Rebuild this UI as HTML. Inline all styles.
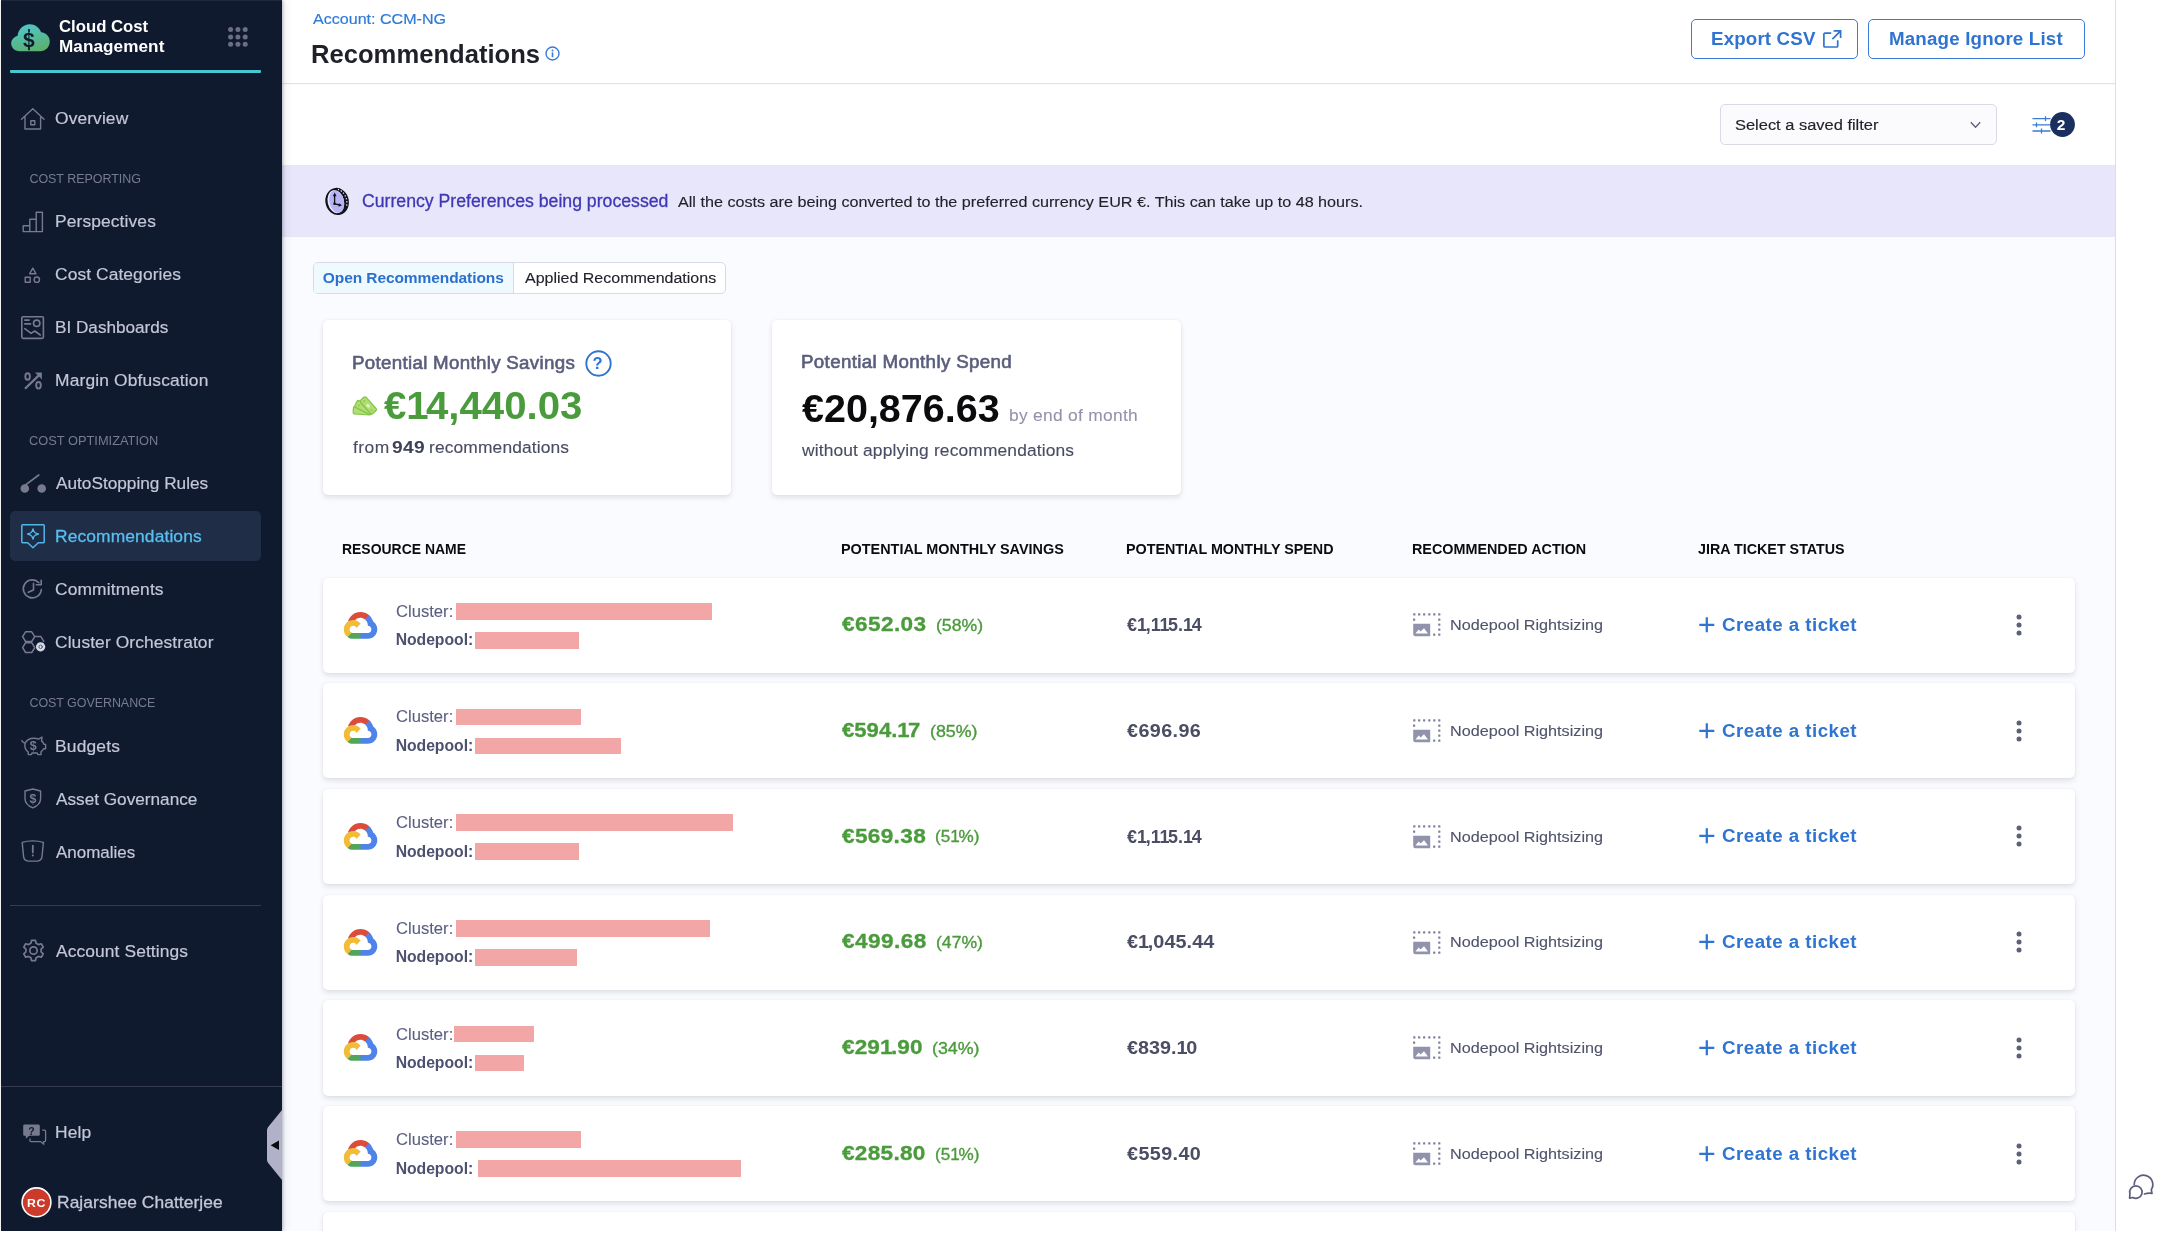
<!DOCTYPE html>
<html lang="en">
<head>
<meta charset="utf-8">
<title>Recommendations - Cloud Cost Management</title>
<style>
*{box-sizing:border-box;margin:0;padding:0}
html,body{width:2180px;height:1238px;overflow:hidden;background:#fff}
body{font-family:"Liberation Sans",sans-serif;position:relative}
.t{position:absolute;white-space:pre;line-height:1;display:block;transform-origin:0 50%}
#app{position:absolute;left:0;top:0;width:2180px;height:1238px;overflow:hidden;will-change:transform}
#main{position:absolute;left:282px;top:0;width:1833px;height:1231px;background:#fafbfe}
#rightbar{position:absolute;left:2115px;top:0;width:65px;height:1231px;background:#fff;border-left:1.5px solid #dcdcea}
#side{position:absolute;left:1px;top:0;width:280.5px;height:1231px;background:#0f1a2e;box-shadow:1px 0 3px rgba(20,25,50,.28),3px 0 10px rgba(20,25,50,.07)}
#header{position:absolute;left:282px;top:0;width:1833px;height:84.2px;background:#fff;border-bottom:1.5px solid #dfe0ea}
#filterbar{position:absolute;left:282px;top:84.5px;width:1833px;height:80.5px;background:#fff}
#banner{position:absolute;left:282px;top:165px;width:1833px;height:71.6px;background:#e7e6fa}
.tealbar{position:absolute;left:10px;top:70.3px;width:251px;height:3px;background:#4ac6d0;border-radius:1px}
.sel{position:absolute;left:10.2px;top:511px;width:250.6px;height:50px;background:#1f2d47;border-radius:5px}
.divider{position:absolute;height:1.3px;background:#363b52}
.btn{position:absolute;top:19px;height:39.8px;border:1.6px solid #3a7bd5;border-radius:5px;background:#fff}
.select{position:absolute;left:1720px;top:104.4px;width:276.8px;height:40.2px;border:1.3px solid #d9dae6;border-radius:5px;background:#fbfbfd}
.tabs{position:absolute;left:312.6px;top:262.2px;width:413.8px;height:31.4px;border:1.3px solid #d9dae5;border-radius:5px;background:#fff;overflow:hidden}
.tabs i{position:absolute;left:0;top:0;width:200px;height:100%;background:#effafe;border-right:1.3px solid #d9dae5}
.card{position:absolute;top:319.5px;height:175.8px;background:#fff;border-radius:5px;box-shadow:0 0 1.25px rgba(40,41,61,.08),0 2.5px 5px rgba(96,97,112,.16)}
.row{position:absolute;left:322.6px;width:1752.2px;height:95.2px;background:#fff;border-radius:5px;box-shadow:0 0 1.25px rgba(40,41,61,.08),0 2.5px 5px rgba(96,97,112,.16)}
.red{position:absolute;height:16.8px;background:#f2a6a6}
.gcp{position:absolute;left:343.6px;width:33px;height:27px}
.nodeic{position:absolute;left:1412.8px;width:28px;height:23.2px}
.plus{position:absolute;left:1699.4px;width:15.6px;height:15.6px}
.kebab{position:absolute;left:2015.6px;width:6px;height:22px;fill:#5e6079}
svg{position:absolute;overflow:visible}
.n1{font-weight:inherit}
#cover{position:absolute;left:0;top:1231px;width:2180px;height:7px;background:#fff;z-index:50}
#cover2{position:absolute;left:2116.5px;top:0;width:64px;height:1238px;background:#fff;z-index:40}
.ni{fill:none;stroke:#77798f;stroke-width:1.4;stroke-linecap:round;stroke-linejoin:round}
</style>
</head>
<body>
<svg width="0" height="0" style="position:absolute">
<defs>
<linearGradient id="ccmg" x1="0.3" y1="0" x2="0.7" y2="1"><stop offset="0" stop-color="#4fc6cf"/><stop offset="1" stop-color="#5bb06a"/></linearGradient>
<g id="gcp">
<path d="M21.0 7.4 L22.1 7.4 L25.0 4.5 L25.2 3.3 C19.8 -1.5 11.5 -1.0 6.7 4.4 C5.4 5.9 4.4 7.7 3.9 9.6 C4.2 9.5 4.9 9.4 4.9 9.4 L10.7 8.5 C10.7 8.5 11.0 8.0 11.2 8.0 C13.7 5.2 18.0 4.9 21.0 7.4 Z" fill="#dc4c3b"/>
<path d="M29.2 9.6 C28.5 7.2 27.1 5.0 25.2 3.3 L21.1 7.4 C22.8 8.8 23.8 10.9 23.8 13.1 L23.8 13.8 C25.8 13.8 27.4 15.4 27.4 17.4 C27.4 19.4 25.8 21.0 23.8 21.0 L16.5 21.0 L15.8 21.8 L15.8 26.1 L16.5 26.8 L23.8 26.8 C29.0 26.9 33.2 22.7 33.3 17.5 C33.3 14.3 31.8 11.4 29.2 9.6 Z" fill="#4f83ea"/>
<path d="M9.2 26.8 L16.5 26.8 L16.5 21.0 L9.2 21.0 C8.7 21.0 8.2 20.9 7.7 20.7 L6.7 21.0 L3.8 23.9 L3.5 24.9 C5.1 26.2 7.1 26.9 9.2 26.8 Z" fill="#52a65a"/>
<path d="M9.2 7.9 C4.0 8.0 -0.2 12.2 -0.2 17.4 C-0.2 20.3 1.2 23.1 3.5 24.9 L7.7 20.7 C5.9 19.8 5.1 17.7 5.9 15.9 C6.7 14.0 8.9 13.2 10.7 14.1 C11.5 14.4 12.2 15.1 12.5 15.9 L16.7 11.6 C14.9 9.3 12.1 7.9 9.2 7.9 Z" fill="#f1bc38"/>
</g>
<g id="nodeic">
<g fill="#7d7f9c"><rect x="0.20" y="0.35" width="2.2" height="2.2" rx=".5"/><rect x="5.05" y="0.35" width="2.2" height="2.2" rx=".5"/><rect x="10.05" y="0.35" width="2.2" height="2.2" rx=".5"/><rect x="15.20" y="0.35" width="2.2" height="2.2" rx=".5"/><rect x="20.20" y="0.35" width="2.2" height="2.2" rx=".5"/><rect x="25.20" y="0.35" width="2.2" height="2.2" rx=".5"/><rect x="0.00" y="5.50" width="2.2" height="2.2" rx=".5"/><rect x="25.20" y="5.50" width="2.2" height="2.2" rx=".5"/><rect x="25.20" y="10.50" width="2.2" height="2.2" rx=".5"/><rect x="25.20" y="15.50" width="2.2" height="2.2" rx=".5"/><rect x="25.20" y="20.50" width="2.2" height="2.2" rx=".5"/><rect x="20.10" y="20.50" width="2.2" height="2.2" rx=".5"/></g>
<path d="M.2 10.700h17v12.500H2.400a2.200 2.200 0 0 1-2.200-2.200z" fill="#9193ad"/>
<path d="M2.400 20.500l3.300-3.900 1.900 2 3.400-3.400 4 5.300z" fill="#fff"/>
</g>
</defs>
</svg>
<div id="app">
<div id="main"></div>
<div id="header"></div>
<div id="filterbar"></div>
<div id="banner"></div>
<div id="rightbar"></div>

<!-- header widgets -->
<div class="btn" style="left:1691px;width:167.3px"></div>
<div class="btn" style="left:1868.2px;width:217px"></div>
<svg style="left:1822.6px;top:30px" width="19" height="18" viewBox="0 0 19 18" fill="none" stroke="#2f74d0" stroke-width="1.7"><path d="M8.2 3.2H1.9a1 1 0 0 0-1 1v11.8a1 1 0 0 0 1 1h11.8a1 1 0 0 0 1-1V10.2"/><path d="M10.6 .9h7v7M17.4 1.1l-8 8"/></svg>
<svg style="left:544.6px;top:45.8px" width="15" height="15" viewBox="0 0 15 15"><circle cx="7.5" cy="7.5" r="6.5" fill="none" stroke="#3a7bd5" stroke-width="1.4"/><circle cx="7.5" cy="4.5" r="1" fill="#3a7bd5"/><rect x="6.7" y="6.4" width="1.6" height="4.8" fill="#3a7bd5"/></svg>
<div class="select"></div>
<svg style="left:1970.4px;top:120.6px" width="11" height="8" viewBox="0 0 11 8"><path d="M.8 1.2l4.7 5 4.7-5" fill="none" stroke="#5a5e78" stroke-width="1.3"/></svg>
<svg style="left:2031.5px;top:115px" width="20" height="20" viewBox="0 0 20 20" stroke="#3a7bd5" stroke-width="1.3" fill="none"><path d="M.5 3.6h18M.5 9.8h18M.5 16h18M13.5 1.2v4.8M4.5 7.4v4.8M9.5 13.6v4.8"/></svg>
<svg style="left:2049.6px;top:112.2px" width="25" height="25" viewBox="0 0 25 25"><circle cx="12.5" cy="12.5" r="12.4" fill="#1a2f5f"/></svg>

<!-- banner icon -->
<svg style="left:325px;top:188px" width="24" height="27" viewBox="0 0 24 27">
<g transform="rotate(-13 12.100 13.400)">
<ellipse cx="12.100" cy="13.400" rx="11.700" ry="13.600" fill="#111118"/>
<path d="M15.600 1.900A8.900 12.200 0 0 1 20 20.600" fill="none" stroke="#e4e3fa" stroke-width="1.300" stroke-dasharray="1.300 1.800"/>
<ellipse cx="10.800" cy="13.400" rx="8.200" ry="11.700" fill="#e9e8fb"/>
<ellipse cx="11.700" cy="13.500" rx="7.300" ry="11.300" fill="#b6b4f5"/>
</g>
<path d="M9.600 7v8.800l5.400 1.200" fill="none" stroke="#111118" stroke-width="1.300" stroke-linejoin="round"/>
<path d="M7.800 8.300L9.700 4.500l1.900 3.800zM14 15.200l3 2.100-3.500 1.400z" fill="#111118"/>
<circle cx="9.500" cy="15.800" r="1.300" fill="#111118"/>
</svg>

<div class="tabs"><i></i></div>
<div class="card" style="left:322.7px;width:408.5px"></div>
<div class="card" style="left:772px;width:408.8px"></div>
<svg style="left:584.8px;top:350px" width="27" height="27" viewBox="0 0 27 27"><circle cx="13.5" cy="13.5" r="12.2" fill="#fff" stroke="#2f74d0" stroke-width="1.9"/></svg>
<svg style="left:353px;top:395.800px" width="24" height="20" viewBox="0 0 24 20">
<g fill="#b1dd74" stroke="#7fc447" stroke-width="1.200">
<rect x="-9" y="-3.800" width="18" height="7.600" rx="1.700" transform="translate(9.300 14.700) rotate(4)"/>
<rect x="-9" y="-3.800" width="18" height="7.600" rx="1.700" transform="translate(11 11.400) rotate(27)"/>
<rect x="-9" y="-3.800" width="18" height="7.600" rx="1.700" transform="translate(15.300 9.400) rotate(48)"/>
</g>
<circle cx="11.300" cy="5" r="1.100" fill="#8fcf4f"/><circle cx="18.500" cy="14.100" r="1.100" fill="#8fcf4f"/><circle cx="5.900" cy="9.600" r="1" fill="#8fcf4f"/>
<ellipse cx="15.100" cy="9.700" rx="2.100" ry="1.500" fill="#dff3c0" transform="rotate(48 15.100 9.700)"/>
</svg>

<span class="t" style="left:312.55px;top:11px;font-size:15.5px;color:#2f7bd6;-webkit-text-stroke:0.2px #2f7bd6;transform:scaleX(1.0368);">Account: CCM-NG</span>
<span class="t" style="left:310.77px;top:42px;font-size:25px;color:#1f2029;font-weight:700;transform:scaleX(1.0244);">Recommendations</span>
<span class="t" style="left:1710.97px;top:31px;font-size:17.5px;color:#2f74d0;font-weight:700;letter-spacing:0.142px;transform:scaleX(1.0700);">Export CSV</span>
<span class="t" style="left:1888.88px;top:31px;font-size:17.5px;color:#2f74d0;font-weight:700;letter-spacing:0.167px;transform:scaleX(1.0700);">Manage Ignore List</span>
<span class="t" style="left:1735.29px;top:117px;font-size:15.5px;color:#22222a;-webkit-text-stroke:0.15px #22222a;transform:scaleX(1.0606);">Select a saved filter</span>
<span class="t" style="left:2056.80px;top:117px;font-size:15.5px;color:#ffffff;font-weight:700;">2</span>
<span class="t" style="left:361.93px;top:193px;font-size:17.5px;color:#3f37b3;-webkit-text-stroke:0.3px #3f37b3;transform:scaleX(1.0095);">Currency Preferences being processed</span>
<span class="t" style="left:678.41px;top:194px;font-size:15.5px;color:#22222a;-webkit-text-stroke:0.12px #22222a;transform:scaleX(1.0425);">All the costs are being converted to the preferred currency EUR €. This can take up to 48 hours.</span>
<span class="t" style="left:322.78px;top:270px;font-size:15.5px;color:#2b70cf;font-weight:700;letter-spacing:-0.082px;">Open Recommendations</span>
<span class="t" style="left:524.72px;top:270px;font-size:15.5px;color:#22222a;-webkit-text-stroke:0.12px #22222a;transform:scaleX(1.0318);">Applied Recommendations</span>
<span class="t" style="left:351.53px;top:355px;font-size:17.5px;color:#5a5e7c;letter-spacing:0.284px;-webkit-text-stroke:0.6px #5a5e7c;transform:scaleX(1.0700);">Potential Monthly Savings</span>
<span class="t" style="left:592.42px;top:355px;font-size:16.5px;color:#2f74d0;font-weight:700;">?</span>
<span class="t" style="left:383.81px;top:387px;font-size:38px;color:#4a9b3b;font-weight:700;transform:scaleX(1.0581);">€<b class="n1" style="margin:0 -2.66px 0 -0.00px">1</b>4,440.03</span>
<span class="t" style="left:352.51px;top:439px;font-size:16.25px;color:#494c62;letter-spacing:0.418px;-webkit-text-stroke:0.12px #494c62;transform:scaleX(1.0700);">from</span>
<span class="t" style="left:392.17px;top:439px;font-size:17px;color:#3f4257;font-weight:700;letter-spacing:0.300px;transform:scaleX(1.1300);">949</span>
<span class="t" style="left:428.57px;top:439px;font-size:16.25px;color:#494c62;letter-spacing:0.124px;-webkit-text-stroke:0.12px #494c62;transform:scaleX(1.0700);">recommendations</span>
<span class="t" style="left:801.23px;top:354px;font-size:17.5px;color:#5a5e7c;letter-spacing:0.328px;-webkit-text-stroke:0.6px #5a5e7c;transform:scaleX(1.0700);">Potential Monthly Spend</span>
<span class="t" style="left:802.42px;top:390px;font-size:38px;color:#0b0b0d;font-weight:700;transform:scaleX(1.0391);">€20,876.63</span>
<span class="t" style="left:1008.78px;top:407px;font-size:16.25px;color:#9293ab;letter-spacing:0.270px;-webkit-text-stroke:0.1px #9293ab;transform:scaleX(1.0700);">by end of month</span>
<span class="t" style="left:802.31px;top:442px;font-size:16.25px;color:#494c62;letter-spacing:0.130px;-webkit-text-stroke:0.12px #494c62;transform:scaleX(1.0700);">without applying recommendations</span>
<span class="t" style="left:341.61px;top:543px;font-size:13.75px;color:#0b0b0d;font-weight:700;transform:scaleX(1.0139);">RESOURCE NAME</span>
<span class="t" style="left:840.88px;top:543px;font-size:13.75px;color:#0b0b0d;font-weight:700;transform:scaleX(1.0475);">POTENTIAL MONTHLY SAVINGS</span>
<span class="t" style="left:1126.28px;top:543px;font-size:13.75px;color:#0b0b0d;font-weight:700;transform:scaleX(1.0421);">POTENTIAL MONTHLY SPEND</span>
<span class="t" style="left:1411.68px;top:543px;font-size:13.75px;color:#0b0b0d;font-weight:700;transform:scaleX(1.0445);">RECOMMENDED ACTION</span>
<span class="t" style="left:1697.54px;top:543px;font-size:13.75px;color:#0b0b0d;font-weight:700;transform:scaleX(1.0396);">JIRA TICKET STATUS</span>
<div class="row" style="top:577.50px"></div>
<svg class="gcp" style="top:611.50px" viewBox="0 0 33 27"><use href="#gcp"/></svg>
<span class="t" style="left:395.73px;top:603px;font-size:16.25px;color:#5a5f80;-webkit-text-stroke:0.1px #5a5f80;transform:scaleX(1.0228);">Cluster:</span>
<span class="t" style="left:395.64px;top:632px;font-size:15.75px;color:#4d5170;font-weight:700;letter-spacing:-0.032px;">Nodepool:</span>
<div class="red" style="left:455.9px;top:602.80px;width:256.1px"></div>
<div class="red" style="left:475.3px;top:631.80px;width:103.9px"></div>
<span class="t" style="left:842.33px;top:614px;font-size:20px;color:#4a9b3b;font-weight:700;letter-spacing:0.356px;-webkit-text-stroke:0.3px #4a9b3b;transform:scaleX(1.1300);">€652.03</span>
<span class="t" style="left:936.05px;top:617px;font-size:16.25px;color:#4a9b3b;-webkit-text-stroke:0.35px #4a9b3b;transform:scaleX(1.0842);">(58%)</span>
<span class="t" style="left:1127.35px;top:617px;font-size:17.5px;color:#4a4d63;font-weight:700;transform:scaleX(1.0237);">€<b class="n1" style="margin:0 -1.23px 0 -0.00px">1</b>,<b class="n1" style="margin:0 -1.23px 0 -0.00px">1</b><b class="n1" style="margin:0 -1.23px 0 -0.00px">1</b>5.<b class="n1" style="margin:0 -1.23px 0 -0.00px">1</b>4</span>
<svg class="nodeic" style="top:613.40px" viewBox="0 0 28 23.2"><use href="#nodeic"/></svg>
<span class="t" style="left:1449.66px;top:617px;font-size:15.5px;color:#50546b;-webkit-text-stroke:0.12px #50546b;transform:scaleX(1.0444);">Nodepool Rightsizing</span>
<svg class="plus" style="top:616.90px" viewBox="0 0 16 16"><path d="M8 .3v15.4M.3 8h15.4" stroke="#2f74d0" stroke-width="2.300" fill="none"/></svg>
<span class="t" style="left:1721.75px;top:617px;font-size:17.5px;color:#2f74d0;font-weight:700;letter-spacing:0.438px;transform:scaleX(1.0700);">Create a ticket</span>
<svg class="kebab" style="top:614.00px" viewBox="0 0 6 22"><circle cx="3" cy="3" r="2.500"/><circle cx="3" cy="11" r="2.500"/><circle cx="3" cy="19" r="2.500"/></svg>
<div class="row" style="top:683.22px"></div>
<svg class="gcp" style="top:717.22px" viewBox="0 0 33 27"><use href="#gcp"/></svg>
<span class="t" style="left:395.73px;top:708px;font-size:16.25px;color:#5a5f80;-webkit-text-stroke:0.1px #5a5f80;transform:scaleX(1.0228);">Cluster:</span>
<span class="t" style="left:395.64px;top:738px;font-size:15.75px;color:#4d5170;font-weight:700;letter-spacing:-0.032px;">Nodepool:</span>
<div class="red" style="left:455.9px;top:708.52px;width:125.6px"></div>
<div class="red" style="left:475.3px;top:737.52px;width:145.7px"></div>
<span class="t" style="left:842.33px;top:720px;font-size:20px;color:#4a9b3b;font-weight:700;-webkit-text-stroke:0.3px #4a9b3b;transform:scaleX(1.1051);">€594.<b class="n1" style="margin:0 -1.40px 0 -0.00px">1</b>7</span>
<span class="t" style="left:929.85px;top:723px;font-size:16.25px;color:#4a9b3b;-webkit-text-stroke:0.35px #4a9b3b;transform:scaleX(1.0961);">(85%)</span>
<span class="t" style="left:1127.32px;top:723px;font-size:17.5px;color:#4a4d63;font-weight:700;letter-spacing:0.352px;transform:scaleX(1.1300);">€696.96</span>
<svg class="nodeic" style="top:719.12px" viewBox="0 0 28 23.2"><use href="#nodeic"/></svg>
<span class="t" style="left:1449.66px;top:723px;font-size:15.5px;color:#50546b;-webkit-text-stroke:0.12px #50546b;transform:scaleX(1.0444);">Nodepool Rightsizing</span>
<svg class="plus" style="top:722.62px" viewBox="0 0 16 16"><path d="M8 .3v15.4M.3 8h15.4" stroke="#2f74d0" stroke-width="2.300" fill="none"/></svg>
<span class="t" style="left:1721.75px;top:723px;font-size:17.5px;color:#2f74d0;font-weight:700;letter-spacing:0.438px;transform:scaleX(1.0700);">Create a ticket</span>
<svg class="kebab" style="top:719.72px" viewBox="0 0 6 22"><circle cx="3" cy="3" r="2.500"/><circle cx="3" cy="11" r="2.500"/><circle cx="3" cy="19" r="2.500"/></svg>
<div class="row" style="top:788.94px"></div>
<svg class="gcp" style="top:822.94px" viewBox="0 0 33 27"><use href="#gcp"/></svg>
<span class="t" style="left:395.73px;top:814px;font-size:16.25px;color:#5a5f80;-webkit-text-stroke:0.1px #5a5f80;transform:scaleX(1.0228);">Cluster:</span>
<span class="t" style="left:395.64px;top:844px;font-size:15.75px;color:#4d5170;font-weight:700;letter-spacing:-0.032px;">Nodepool:</span>
<div class="red" style="left:455.9px;top:814.24px;width:277.1px"></div>
<div class="red" style="left:475.3px;top:843.24px;width:103.9px"></div>
<span class="t" style="left:842.33px;top:826px;font-size:20px;color:#4a9b3b;font-weight:700;letter-spacing:0.296px;-webkit-text-stroke:0.3px #4a9b3b;transform:scaleX(1.1300);">€569.38</span>
<span class="t" style="left:935.37px;top:828px;font-size:16.25px;color:#4a9b3b;-webkit-text-stroke:0.35px #4a9b3b;transform:scaleX(1.0523);">(5<b class="n1" style="margin:0 -1.14px 0 -0.00px">1</b>%)</span>
<span class="t" style="left:1127.35px;top:829px;font-size:17.5px;color:#4a4d63;font-weight:700;transform:scaleX(1.0237);">€<b class="n1" style="margin:0 -1.23px 0 -0.00px">1</b>,<b class="n1" style="margin:0 -1.23px 0 -0.00px">1</b><b class="n1" style="margin:0 -1.23px 0 -0.00px">1</b>5.<b class="n1" style="margin:0 -1.23px 0 -0.00px">1</b>4</span>
<svg class="nodeic" style="top:824.84px" viewBox="0 0 28 23.2"><use href="#nodeic"/></svg>
<span class="t" style="left:1449.66px;top:829px;font-size:15.5px;color:#50546b;-webkit-text-stroke:0.12px #50546b;transform:scaleX(1.0444);">Nodepool Rightsizing</span>
<svg class="plus" style="top:828.34px" viewBox="0 0 16 16"><path d="M8 .3v15.4M.3 8h15.4" stroke="#2f74d0" stroke-width="2.300" fill="none"/></svg>
<span class="t" style="left:1721.75px;top:828px;font-size:17.5px;color:#2f74d0;font-weight:700;letter-spacing:0.438px;transform:scaleX(1.0700);">Create a ticket</span>
<svg class="kebab" style="top:825.44px" viewBox="0 0 6 22"><circle cx="3" cy="3" r="2.500"/><circle cx="3" cy="11" r="2.500"/><circle cx="3" cy="19" r="2.500"/></svg>
<div class="row" style="top:894.66px"></div>
<svg class="gcp" style="top:928.66px" viewBox="0 0 33 27"><use href="#gcp"/></svg>
<span class="t" style="left:395.73px;top:920px;font-size:16.25px;color:#5a5f80;-webkit-text-stroke:0.1px #5a5f80;transform:scaleX(1.0228);">Cluster:</span>
<span class="t" style="left:395.64px;top:949px;font-size:15.75px;color:#4d5170;font-weight:700;letter-spacing:-0.032px;">Nodepool:</span>
<div class="red" style="left:455.9px;top:919.96px;width:254.1px"></div>
<div class="red" style="left:475.3px;top:948.96px;width:102.0px"></div>
<span class="t" style="left:842.33px;top:931px;font-size:20px;color:#4a9b3b;font-weight:700;letter-spacing:0.372px;-webkit-text-stroke:0.3px #4a9b3b;transform:scaleX(1.1300);">€499.68</span>
<span class="t" style="left:935.85px;top:934px;font-size:16.25px;color:#4a9b3b;-webkit-text-stroke:0.35px #4a9b3b;transform:scaleX(1.0834);">(47%)</span>
<span class="t" style="left:1127.32px;top:934px;font-size:17.5px;color:#4a4d63;font-weight:700;letter-spacing:0.069px;transform:scaleX(1.1300);">€<b class="n1" style="margin:0 -1.23px 0 -0.00px">1</b>,045.44</span>
<svg class="nodeic" style="top:930.56px" viewBox="0 0 28 23.2"><use href="#nodeic"/></svg>
<span class="t" style="left:1449.66px;top:934px;font-size:15.5px;color:#50546b;-webkit-text-stroke:0.12px #50546b;transform:scaleX(1.0444);">Nodepool Rightsizing</span>
<svg class="plus" style="top:934.06px" viewBox="0 0 16 16"><path d="M8 .3v15.4M.3 8h15.4" stroke="#2f74d0" stroke-width="2.300" fill="none"/></svg>
<span class="t" style="left:1721.75px;top:934px;font-size:17.5px;color:#2f74d0;font-weight:700;letter-spacing:0.438px;transform:scaleX(1.0700);">Create a ticket</span>
<svg class="kebab" style="top:931.16px" viewBox="0 0 6 22"><circle cx="3" cy="3" r="2.500"/><circle cx="3" cy="11" r="2.500"/><circle cx="3" cy="19" r="2.500"/></svg>
<div class="row" style="top:1000.38px"></div>
<svg class="gcp" style="top:1034.38px" viewBox="0 0 33 27"><use href="#gcp"/></svg>
<span class="t" style="left:395.73px;top:1026px;font-size:16.25px;color:#5a5f80;-webkit-text-stroke:0.1px #5a5f80;transform:scaleX(1.0228);">Cluster:</span>
<span class="t" style="left:395.64px;top:1055px;font-size:15.75px;color:#4d5170;font-weight:700;letter-spacing:-0.032px;">Nodepool:</span>
<div class="red" style="left:454.3px;top:1025.68px;width:79.7px"></div>
<div class="red" style="left:475.3px;top:1054.68px;width:48.7px"></div>
<span class="t" style="left:842.33px;top:1037px;font-size:20px;color:#4a9b3b;font-weight:700;letter-spacing:0.062px;-webkit-text-stroke:0.3px #4a9b3b;transform:scaleX(1.1300);">€29<b class="n1" style="margin:0 -1.40px 0 -0.00px">1</b>.90</span>
<span class="t" style="left:932.35px;top:1040px;font-size:16.25px;color:#4a9b3b;-webkit-text-stroke:0.35px #4a9b3b;transform:scaleX(1.0961);">(34%)</span>
<span class="t" style="left:1127.32px;top:1040px;font-size:17.5px;color:#4a4d63;font-weight:700;letter-spacing:0.018px;transform:scaleX(1.1300);">€839.<b class="n1" style="margin:0 -1.23px 0 -0.00px">1</b>0</span>
<svg class="nodeic" style="top:1036.28px" viewBox="0 0 28 23.2"><use href="#nodeic"/></svg>
<span class="t" style="left:1449.66px;top:1040px;font-size:15.5px;color:#50546b;-webkit-text-stroke:0.12px #50546b;transform:scaleX(1.0444);">Nodepool Rightsizing</span>
<svg class="plus" style="top:1039.78px" viewBox="0 0 16 16"><path d="M8 .3v15.4M.3 8h15.4" stroke="#2f74d0" stroke-width="2.300" fill="none"/></svg>
<span class="t" style="left:1721.75px;top:1040px;font-size:17.5px;color:#2f74d0;font-weight:700;letter-spacing:0.438px;transform:scaleX(1.0700);">Create a ticket</span>
<svg class="kebab" style="top:1036.88px" viewBox="0 0 6 22"><circle cx="3" cy="3" r="2.500"/><circle cx="3" cy="11" r="2.500"/><circle cx="3" cy="19" r="2.500"/></svg>
<div class="row" style="top:1106.10px"></div>
<svg class="gcp" style="top:1140.10px" viewBox="0 0 33 27"><use href="#gcp"/></svg>
<span class="t" style="left:395.73px;top:1131px;font-size:16.25px;color:#5a5f80;-webkit-text-stroke:0.1px #5a5f80;transform:scaleX(1.0228);">Cluster:</span>
<span class="t" style="left:395.64px;top:1161px;font-size:15.75px;color:#4d5170;font-weight:700;letter-spacing:-0.032px;">Nodepool:</span>
<div class="red" style="left:455.9px;top:1131.40px;width:125.6px"></div>
<div class="red" style="left:478.0px;top:1160.40px;width:262.5px"></div>
<span class="t" style="left:842.33px;top:1143px;font-size:20px;color:#4a9b3b;font-weight:700;letter-spacing:0.244px;-webkit-text-stroke:0.3px #4a9b3b;transform:scaleX(1.1300);">€285.80</span>
<span class="t" style="left:935.37px;top:1146px;font-size:16.25px;color:#4a9b3b;-webkit-text-stroke:0.35px #4a9b3b;transform:scaleX(1.0523);">(5<b class="n1" style="margin:0 -1.14px 0 -0.00px">1</b>%)</span>
<span class="t" style="left:1127.32px;top:1146px;font-size:17.5px;color:#4a4d63;font-weight:700;letter-spacing:0.336px;transform:scaleX(1.1300);">€559.40</span>
<svg class="nodeic" style="top:1142.00px" viewBox="0 0 28 23.2"><use href="#nodeic"/></svg>
<span class="t" style="left:1449.66px;top:1146px;font-size:15.5px;color:#50546b;-webkit-text-stroke:0.12px #50546b;transform:scaleX(1.0444);">Nodepool Rightsizing</span>
<svg class="plus" style="top:1145.50px" viewBox="0 0 16 16"><path d="M8 .3v15.4M.3 8h15.4" stroke="#2f74d0" stroke-width="2.300" fill="none"/></svg>
<span class="t" style="left:1721.75px;top:1146px;font-size:17.5px;color:#2f74d0;font-weight:700;letter-spacing:0.438px;transform:scaleX(1.0700);">Create a ticket</span>
<svg class="kebab" style="top:1142.60px" viewBox="0 0 6 22"><circle cx="3" cy="3" r="2.500"/><circle cx="3" cy="11" r="2.500"/><circle cx="3" cy="19" r="2.500"/></svg>
<div class="row" style="top:1211.82px"></div>

<svg style="left:2128px;top:1174px" width="26" height="26" viewBox="0 0 26 26" fill="none" stroke="#5b5e7a" stroke-width="1.700" stroke-linejoin="round" stroke-linecap="round"><path d="M6.200 10.500A9.300 9.300 0 1 1 23.300 15.600L24 19.400C20.800 18.600 18.800 19.200 16.400 20"/><path d="M1.910 19.700A6.200 6.200 0 1 1 4.800 23.470L1.600 24.100z"/></svg>

<!-- sidebar -->
<div id="side">
<div style="position:absolute;left:0;top:0;width:280.500px;height:1.200px;background:rgba(255,255,255,.06)"></div>
<div class="tealbar" style="left:9px"></div>
<div class="sel" style="left:9.2px"></div>
<div class="divider" style="left:9.2px;top:904.5px;width:250.6px"></div>
<div class="divider" style="left:0;top:1085.5px;width:280.5px"></div>
</div>
<!-- sidebar icons (page coords) -->
<svg style="left:11px;top:23.6px" width="39" height="28" viewBox="0 0 39 28"><path d="M8.500 27.300C3.800 27.300 .2 23.900 .2 19.600c0-3.700 2.700-6.800 6.300-7.500C7.300 5.300 12.400 .3 18.800 .3c5.200 0 9.600 3.300 11.300 7.900 4.900.3 8.700 4.300 8.700 9.300 0 5.400-4.200 9.800-9.500 9.800z" fill="url(#ccmg)"/></svg>
<span class="t" style="left:23px;top:28.500px;font-size:21px;font-weight:700;color:#0f1a2e">$</span><svg style="left:27.800px;top:29.300px" width="2" height="21" viewBox="0 0 2 21"><path d="M1 0v3M1 18v3.200" stroke="#0f1a2e" stroke-width="1.800"/></svg>
<svg style="left:227.5px;top:27px" width="21" height="21" viewBox="0 0 21 21" fill="#6c6e86"><circle cx="2.600" cy="2.600" r="2.500"/><circle cx="9.900" cy="2.600" r="2.500"/><circle cx="17.200" cy="2.600" r="2.500"/><circle cx="2.600" cy="9.900" r="2.500"/><circle cx="9.900" cy="9.900" r="2.500"/><circle cx="17.200" cy="9.900" r="2.500"/><circle cx="2.600" cy="17.200" r="2.500"/><circle cx="9.900" cy="17.200" r="2.500"/><circle cx="17.200" cy="17.200" r="2.500"/></svg>

<!-- Overview -->
<svg class="ni" style="left:20px;top:106.500px" width="26" height="24" viewBox="0 0 26 24"><path d="M1.500 12.200L12.800 1.800 24 12.200M5 10v12h15.600V10M10.800 13.800h4v4h-4z"/></svg>
<!-- Perspectives -->
<svg class="ni" style="left:22px;top:211px" width="22" height="22" viewBox="0 0 22 22"><path d="M1.200 14.800h6.600v5.800H1.200zM7.800 8.200h6.400v12.400H7.800zM14.200 1.200h6.200v19.400h-6.200z"/></svg>
<!-- Cost Categories -->
<svg class="ni" style="left:24px;top:266.500px" width="18" height="17" viewBox="0 0 18 17"><path d="M8.800 1.200l3.200 5.600H5.600zM1.200 10.200h5v5h-5z"/><circle cx="12.800" cy="12.700" r="2.700"/></svg>
<!-- BI Dashboards -->
<svg class="ni" style="left:21.300px;top:315.800px;stroke-width:1.600" width="24" height="24" viewBox="0 0 24 24"><rect x=".8" y=".8" width="21.600" height="21.600" rx="1.300"/><path d="M3.800 4.100h4.300M3.800 7.900h5.800M3.800 12.600l6.300 4.800 3.600-2.400 5.600 4"/><circle cx="15.700" cy="7.300" r="3.200"/></svg>
<!-- Margin Obfuscation -->
<svg style="left:23.700px;top:371.500px" width="19" height="18" viewBox="0 0 19 18"><g fill="none" stroke="#77798f" stroke-width="1.900"><ellipse cx="3.600" cy="4.500" rx="2.300" ry="3.300"/><ellipse cx="14.500" cy="13.300" rx="2.300" ry="3.300"/><path d="M1 16.800L15.600 2.600" stroke-width="2.300"/></g><path d="M11 .5h6.900v6.900z" fill="#77798f"/></svg>
<!-- AutoStopping -->
<svg style="left:19.500px;top:474px" width="27" height="20" viewBox="0 0 27 20"><circle cx="4.800" cy="14.500" r="4.300" fill="#77798f"/><circle cx="21.700" cy="14.500" r="4.300" fill="#77798f"/><path d="M4.600 11.600L18.800 1" stroke="#77798f" stroke-width="1.700" fill="none" stroke-linecap="round"/></svg>
<!-- Recommendations -->
<svg class="ni" style="left:20.600px;top:523.900px;stroke:#4fb6e8;stroke-width:1.500" width="24" height="24" viewBox="0 0 24 24"><path d="M1.600.8h20.800a.8.800 0 0 1 .8.800v16.400a.8.800 0 0 1-.8.800H17.300l-5.300 5-5.300-5H1.600a.8.800 0 0 1-.8-.8V1.600a.8.800 0 0 1 .8-.8z"/><path d="M12 5c.8 3.300 1.800 4.200 5.400 5-3.600.8-4.600 1.700-5.400 5-.8-3.300-1.800-4.200-5.400-5 3.600-.8 4.600-1.700 5.400-5z"/></svg>
<!-- Commitments -->
<svg class="ni" style="left:22.900px;top:578.700px;stroke-width:1.600" width="20" height="20" viewBox="0 0 20 20"><path d="M18.300 10.600A9 9 0 1 1 15.900 3.700"/><path d="M13.300 5.700h4.900V1.200M10.500 4.400v6.500l-5.200 2.400"/></svg>
<!-- Cluster Orchestrator -->
<svg class="ni" style="left:21.700px;top:630.800px;stroke-width:1.500" width="24" height="23" viewBox="0 0 24 23"><path d="M.6 5.600L3.600.8h6.100l3.100 4.800-3.100 4.900H3.600zM.6 16.600l3-4.900h6.100l3.100 4.900-3.100 4.900H3.600zM12.800 5.600h6.100l2.900 4.700"/><circle cx="18.600" cy="15.800" r="3.900" fill="#d6d7e7" stroke="#d6d7e7" stroke-width="1.500" stroke-dasharray="1.300 1.150"/><circle cx="18.600" cy="15.800" r="3.300" fill="#d6d7e7" stroke="none"/><circle cx="18.600" cy="15.800" r="1.700" fill="#e4e5f0" stroke="#4a4f68" stroke-width=".9"/></svg>
<!-- Budgets -->
<svg class="ni" style="left:20.500px;top:736px" width="26" height="20" viewBox="0 0 26 20"><path d="M.8 4.600c.8 1.400 1.800 2.200 3 2.600M4 7.600C5.400 4 8.800 2.200 13 2.200c1.700 0 3.200.3 4.600.9L21 1l-.4 3.900c1.200 1 2 2.200 2.400 3.500h1.600v4.400h-2c-.6 1.200-1.500 2.200-2.600 3v2.800h-3.200l-.6-1.600h-5.200l-.6 1.600H7.200V16C4.800 14.200 3.400 11 4 7.600z"/></svg>
<span class="t" style="left:29.800px;top:739.800px;font-size:12.500px;font-weight:700;color:#77798f">$</span>
<!-- Asset Governance -->
<svg class="ni" style="left:24px;top:788px" width="18" height="21" viewBox="0 0 18 21"><path d="M8.800 1L16.600 3v7.600c0 4.200-3 7.400-7.800 9.200C4 18 1 14.800 1 10.600V3z"/></svg>
<span class="t" style="left:29.600px;top:793px;font-size:12.500px;font-weight:700;color:#77798f">$</span>
<!-- Anomalies -->
<svg class="ni" style="left:21px;top:840px" width="24" height="23" viewBox="0 0 24 23"><path d="M1.200 2.400C4.400 1.400 8 .9 11.800.9s7.400.5 10.600 1.500l-1.400 14.200c-.3 2.600-2 4.200-4.600 4.500H7.200c-2.600-.3-4.300-1.900-4.600-4.500z"/><path d="M11.800 5.600v6.800M11.800 15.200v.4" stroke-width="1.800"/></svg>
<!-- Account settings -->
<svg class="ni" style="left:21.800px;top:939.100px;stroke-width:1.700" width="23" height="23" viewBox="0 0 23 23"><path d="M13.47 1.39 L9.53 1.39 L8.87 4.26 L6.55 5.60 L3.73 4.74 L1.76 8.15 L3.92 10.16 L3.92 12.84 L1.76 14.85 L3.73 18.26 L6.55 17.40 L8.87 18.74 L9.53 21.61 L13.47 21.61 L14.13 18.74 L16.45 17.40 L19.27 18.26 L21.24 14.85 L19.08 12.84 L19.08 10.16 L21.24 8.15 L19.27 4.74 L16.45 5.60 L14.13 4.26z"/><circle cx="11.500" cy="11.500" r="3.700"/></svg>
<!-- Help -->
<svg style="left:22.500px;top:1124px" width="24" height="21" viewBox="0 0 24 21"><path d="M1.600 .4h13.800c.8 0 1.400.6 1.400 1.400v8.600c0 .8-.6 1.400-1.400 1.400H6.200l-3.400 3v-3H1.600c-.8 0-1.400-.6-1.400-1.400V1.800C.2 1 .8.400 1.600.4z" fill="#77798f"/><path d="M19.200 6.200h2.400c.6 0 1 .4 1 1v9.400c0 .6-.4 1-1 1h-1v2.600l-3-2.600H8c-.6 0-1-.4-1-1v-2" fill="none" stroke="#77798f" stroke-width="1.300"/></svg>
<span class="t" style="left:28.200px;top:1126.200px;font-size:10.500px;font-weight:700;color:#0f1a2e">?</span>
<!-- avatar -->
<svg style="left:21px;top:1187px" width="31" height="31" viewBox="0 0 31 31"><circle cx="15.500" cy="15.300" r="14.400" fill="#cb3a2a" stroke="#fff" stroke-width="1.600"/></svg>
<!-- collapse handle -->
<svg style="left:266.500px;top:1109.500px" width="15" height="70" viewBox="0 0 15 70"><path d="M15 0v70L1.600 53.500C.5 52.200 0 51 0 49.500v-29c0-1.500.5-2.700 1.600-4z" fill="#b1b2c9"/><path d="M12 30.500v9.400L3.600 35.200z" fill="#0b0b0d"/></svg>

<span class="t" style="left:59.47px;top:19px;font-size:16px;color:#ffffff;font-weight:700;transform:scaleX(1.0452);">Cloud Cost</span>
<span class="t" style="left:59.26px;top:39px;font-size:16px;color:#ffffff;font-weight:700;letter-spacing:0.072px;transform:scaleX(1.0700);">Management</span>
<span class="t" style="left:54.84px;top:110px;font-size:16.25px;color:#c5c7d9;letter-spacing:0.098px;-webkit-text-stroke:0.18px #c5c7d9;transform:scaleX(1.0700);">Overview</span>
<span class="t" style="left:29.43px;top:173px;font-size:12.5px;color:#777a93;letter-spacing:-0.046px;">COST REPORTING</span>
<span class="t" style="left:54.81px;top:213px;font-size:16.25px;color:#c5c7d9;letter-spacing:0.112px;-webkit-text-stroke:0.18px #c5c7d9;transform:scaleX(1.0700);">Perspectives</span>
<span class="t" style="left:54.93px;top:266px;font-size:16.25px;color:#c5c7d9;letter-spacing:0.084px;-webkit-text-stroke:0.18px #c5c7d9;transform:scaleX(1.0700);">Cost Categories</span>
<span class="t" style="left:54.82px;top:319px;font-size:16.25px;color:#c5c7d9;-webkit-text-stroke:0.18px #c5c7d9;transform:scaleX(1.0552);">BI Dashboards</span>
<span class="t" style="left:54.61px;top:372px;font-size:16.25px;color:#c5c7d9;letter-spacing:0.140px;-webkit-text-stroke:0.18px #c5c7d9;transform:scaleX(1.0700);">Margin Obfuscation</span>
<span class="t" style="left:29.45px;top:435px;font-size:12.5px;color:#777a93;transform:scaleX(1.0265);">COST OPTIMIZATION</span>
<span class="t" style="left:55.74px;top:475px;font-size:16.25px;color:#c5c7d9;-webkit-text-stroke:0.18px #c5c7d9;transform:scaleX(1.0593);">AutoStopping Rules</span>
<span class="t" style="left:54.90px;top:528px;font-size:16.25px;color:#58bff0;letter-spacing:0.111px;-webkit-text-stroke:0.3px #58bff0;transform:scaleX(1.0700);">Recommendations</span>
<span class="t" style="left:54.93px;top:581px;font-size:16.25px;color:#c5c7d9;letter-spacing:0.124px;-webkit-text-stroke:0.18px #c5c7d9;transform:scaleX(1.0700);">Commitments</span>
<span class="t" style="left:54.93px;top:634px;font-size:16.25px;color:#c5c7d9;letter-spacing:0.093px;-webkit-text-stroke:0.18px #c5c7d9;transform:scaleX(1.0700);">Cluster Orchestrator</span>
<span class="t" style="left:29.43px;top:697px;font-size:12.5px;color:#777a93;letter-spacing:-0.064px;">COST GOVERNANCE</span>
<span class="t" style="left:54.81px;top:738px;font-size:16.25px;color:#c5c7d9;letter-spacing:0.172px;-webkit-text-stroke:0.18px #c5c7d9;transform:scaleX(1.0700);">Budgets</span>
<span class="t" style="left:55.74px;top:791px;font-size:16.25px;color:#c5c7d9;-webkit-text-stroke:0.18px #c5c7d9;transform:scaleX(1.0572);">Asset Governance</span>
<span class="t" style="left:55.74px;top:844px;font-size:16.25px;color:#c5c7d9;-webkit-text-stroke:0.18px #c5c7d9;transform:scaleX(1.0438);">Anomalies</span>
<span class="t" style="left:55.74px;top:943px;font-size:16.25px;color:#c5c7d9;letter-spacing:0.093px;-webkit-text-stroke:0.18px #c5c7d9;transform:scaleX(1.0700);">Account Settings</span>
<span class="t" style="left:54.81px;top:1124px;font-size:16.25px;color:#c5c7d9;letter-spacing:0.143px;-webkit-text-stroke:0.18px #c5c7d9;transform:scaleX(1.0700);">Help</span>
<span class="t" style="left:27.35px;top:1198px;font-size:11.5px;color:#ffffff;font-weight:700;letter-spacing:0.471px;transform:scaleX(1.0700);">RC</span>
<span class="t" style="left:57.10px;top:1194px;font-size:16.25px;color:#c5c7d9;letter-spacing:0.068px;-webkit-text-stroke:0.3px #c5c7d9;transform:scaleX(1.0700);">Rajarshee Chatterjee</span>
<div id="cover"></div>
</div>
</body>
</html>
